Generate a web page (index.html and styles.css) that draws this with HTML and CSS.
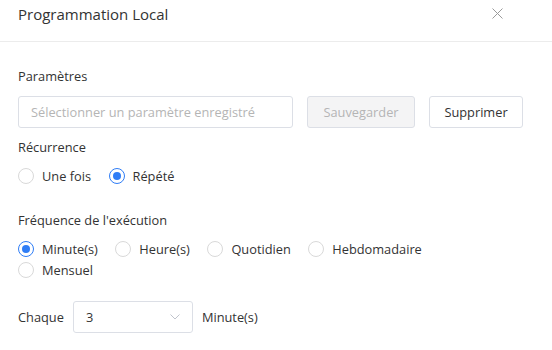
FILE: index.html
```html
<!DOCTYPE html>
<html lang="fr">
<head>
<meta charset="utf-8">
<link rel="stylesheet" href="styles.css">
</head>
<body>
<div class="dialog">
  <div class="header">
    <span class="title">Programmation Local</span>
    <svg class="close" width="11" height="11" viewBox="0 0 11 11"><path d="M0.5 0.5L10.5 10.5M10.5 0.5L0.5 10.5" stroke="#9a9a9a" stroke-width="1" fill="none"/></svg>
  </div>
  <div class="body">
    <div class="label first">Paramètres</div>
    <div class="row">
      <div class="input">Sélectionner un paramètre enregistré</div>
      <div class="btn disabled">Sauvegarder</div>
      <div class="btn">Supprimer</div>
    </div>
    <div class="label">Récurrence</div>
    <div class="radios">
      <label class="radio"><span class="dot"></span>Une fois</label>
      <label class="radio on"><span class="dot"></span>Répété</label>
    </div>
    <div class="label sec">Fréquence de l'exécution</div>
    <div class="radios wrap">
      <label class="radio on"><span class="dot"></span>Minute(s)</label>
      <label class="radio"><span class="dot"></span>Heure(s)</label>
      <label class="radio"><span class="dot"></span>Quotidien</label>
      <label class="radio"><span class="dot"></span>Hebdomadaire</label>
      <label class="radio"><span class="dot"></span>Mensuel</label>
    </div>
    <div class="every">
      <span>Chaque</span>
      <div class="select"><span>3</span><svg width="10" height="6" viewBox="0 0 10 6"><path d="M0.5 0.5L5 5L9.5 0.5" stroke="#c0c4cc" fill="none"/></svg></div>
      <span>Minute(s)</span>
    </div>
  </div>
</div>
</body>
</html>
```
FILE: styles.css
```css
* { box-sizing: border-box; }
body { margin: 0; background: #fff; font-family: "Open Sans", "Noto Sans", sans-serif; font-size: 12.8px; color: #333; }
.dialog { width: 552px; height: 350px; }
.header { height: 42px; border-bottom: 1px solid #ececec; display: flex; align-items: center; justify-content: space-between; padding: 0 49px 14px 18px; }
.title { font-size: 15px; color: #333; }
.body { padding: 0 18px; }
.label { line-height: 18px; }
.label.first { margin-top: 25px; }
.row { display: flex; margin-top: 11px; gap: 14px; }
.input { width: 275px; height: 32px; border: 1px solid #dcdfe6; border-radius: 3px; padding: 0 12px; line-height: 30px; color: #b5b5b5; }
.btn { height: 32px; border: 1px solid #dcdfe6; border-radius: 3px; line-height: 30px; color: #333; width: 94px; text-align: center; }
.btn.disabled { background: #f4f4f5; color: #b5b5b5; width: 108px; }
.row + .label { margin-top: 10px; }
.radios { display: flex; margin-top: 12px; column-gap: 17.5px; }
.radios.wrap { flex-wrap: wrap; width: 440px; row-gap: 5px; }
.radio { display: flex; align-items: center; line-height: 16px; }
.dot { width: 16px; height: 16px; border: 1px solid #d9d9d9; border-radius: 50%; margin-right: 8px; position: relative; }
.radio.on .dot { border-color: #2f7df6; }
.radio.on .dot::after { content: ""; position: absolute; left: 3px; top: 3px; width: 8px; height: 8px; border-radius: 50%; background: #2f7df6; }
.label.sec { margin-top: 27px; }
.every { display: flex; align-items: center; margin-top: 23px; gap: 9px; }
.select { width: 120px; height: 32px; border: 1px solid #dcdfe6; border-radius: 3px; display: flex; align-items: center; justify-content: space-between; padding: 0 12px; }
```
